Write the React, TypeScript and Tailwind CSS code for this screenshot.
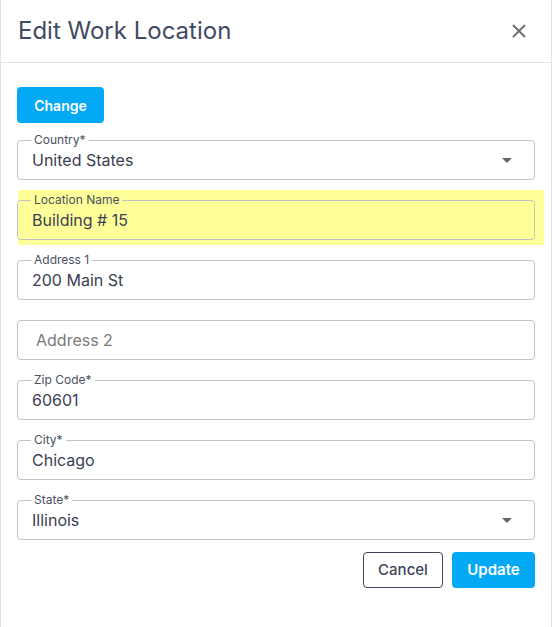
import * as React from 'react';

type FieldProps = {
  label?: string;
  value?: string;
  placeholder?: string;
  select?: boolean;
  labelBg?: string;
  className?: string;
};

function Field({ label, value, placeholder, select, labelBg = 'bg-white', className = '' }: FieldProps) {
  return (
    <div
      className={`relative flex h-10 items-center rounded border border-[#c2c2c2] pl-[14px] pr-[22px] ${className}`}
    >
      {label && (
        <span
          className={`absolute -top-[9px] left-[13px] px-[3px] text-[12px] leading-4 text-[#4a5061] ${labelBg}`}
        >
          {label}
        </span>
      )}
      {value ? (
        <span className="flex-1 text-[16px] text-[#3a4053]">{value}</span>
      ) : (
        <span className="flex-1 pl-[4px] text-[16px] text-[#7a7a7a]">{placeholder}</span>
      )}
      {select && (
        <svg width="10" height="5" viewBox="0 0 10 5" className="text-[#666]">
          <path d="M0 0h10L5 5z" fill="currentColor" />
        </svg>
      )}
    </div>
  );
}

export default function App() {
  return (
    <div
      className="h-[627px] w-[552px] border-x border-[#e2e2e2] bg-white"
      style={{ fontFamily: 'Inter, "Noto Sans", sans-serif' }}
    >
      {/* Header */}
      <div className="flex h-[63px] items-center justify-between border-b border-[#e2e2e2] pl-[17px] pr-[25px]">
        <h2 className="text-[24px] font-normal text-[#414a62]">Edit Work Location</h2>
        <button type="button" aria-label="Close" className="text-[#707070]">
          <svg width="14" height="14" viewBox="0 0 14 14">
            <path d="M1 1l12 12M13 1L1 13" stroke="currentColor" strokeWidth="2" />
          </svg>
        </button>
      </div>

      {/* Body */}
      <div className="px-[16px] pt-[24px]">
        <button
          type="button"
          className="h-9 w-[87px] rounded bg-[#03a9f4] text-[14px] font-semibold text-white"
        >
          Change
        </button>

        <Field className="mt-[17px]" label="Country*" value="United States" select />

        <div className="ml-px mr-[-9px] mt-[10px] bg-[#ffff99] pb-[5px] pl-0 pr-[9px] pt-[10px]">
          <Field className="-ml-px" label="Location Name" value="Building # 15" labelBg="bg-[#ffff99]" />
        </div>

        <Field className="mt-[15px]" label="Address 1" value="200 Main St" />
        <Field className="mt-[20px]" placeholder="Address 2" />
        <Field className="mt-[20px]" label="Zip Code*" value="60601" />
        <Field className="mt-[20px]" label="City*" value="Chicago" />
        <Field className="mt-[20px]" label="State*" value="Illinois" select />

        <div className="mt-[12px] flex justify-end gap-[9px]">
          <button
            type="button"
            className="h-9 w-[80px] rounded border border-[#3d4459] text-[15px] font-medium text-[#3d4459]"
          >
            Cancel
          </button>
          <button
            type="button"
            className="h-9 w-[83px] rounded bg-[#03a9f4] text-[15px] font-semibold text-white"
          >
            Update
          </button>
        </div>
      </div>
    </div>
  );
}
